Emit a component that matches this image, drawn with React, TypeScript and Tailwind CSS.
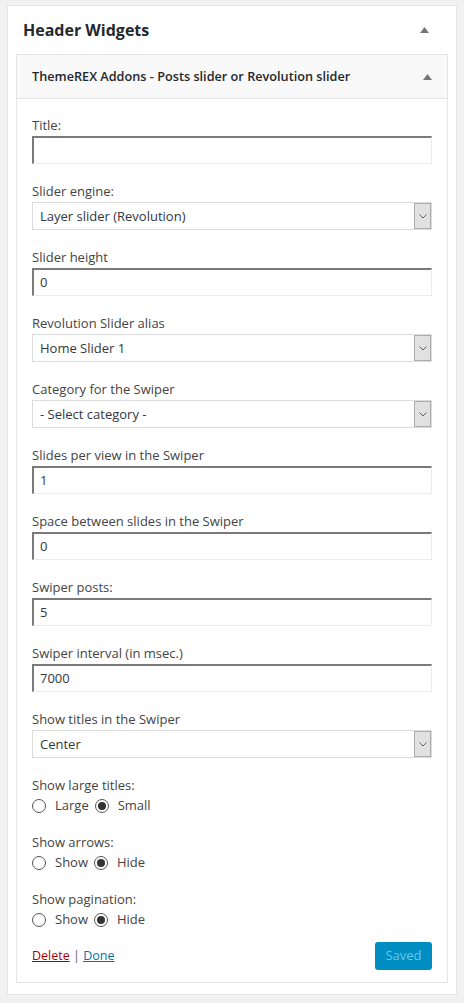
import React from 'react';

const font = { fontFamily: '"Open Sans", "Noto Sans", sans-serif' };

type Field =
  | { kind: 'input'; label: string; value: string }
  | { kind: 'select'; label: string; value: string }
  | { kind: 'radio'; label: string; options: [string, string]; checked: number };

const fields: Field[] = [
  { kind: 'input', label: 'Title:', value: '' },
  { kind: 'select', label: 'Slider engine:', value: 'Layer slider (Revolution)' },
  { kind: 'input', label: 'Slider height', value: '0' },
  { kind: 'select', label: 'Revolution Slider alias', value: 'Home Slider 1' },
  { kind: 'select', label: 'Category for the Swiper', value: '- Select category -' },
  { kind: 'input', label: 'Slides per view in the Swiper', value: '1' },
  { kind: 'input', label: 'Space between slides in the Swiper', value: '0' },
  { kind: 'input', label: 'Swiper posts:', value: '5' },
  { kind: 'input', label: 'Swiper interval (in msec.)', value: '7000' },
  { kind: 'select', label: 'Show titles in the Swiper', value: 'Center' },
  { kind: 'radio', label: 'Show large titles:', options: ['Large', 'Small'], checked: 1 },
  { kind: 'radio', label: 'Show arrows:', options: ['Show', 'Hide'], checked: 1 },
  { kind: 'radio', label: 'Show pagination:', options: ['Show', 'Hide'], checked: 1 },
];

function Caret() {
  return (
    <svg width="9" height="6" viewBox="0 0 9 6" className="shrink-0">
      <path d="M4.5 0 L9 6 L0 6 Z" fill="#72777c" />
    </svg>
  );
}

function TextBox({ value }: { value: string }) {
  return (
    <div className="h-[28px] border-t-2 border-l-2 border-t-[#7a7a7a] border-l-[#7a7a7a] border-r border-b border-r-[#ececec] border-b-[#ececec] bg-white pl-[6px] text-[13px] leading-[25px] text-[#32373c]">
      {value}
    </div>
  );
}

function SelectBox({ value }: { value: string }) {
  return (
    <div className="flex h-[28px] border border-[#dcdcdc] bg-white">
      <div className="flex-1 pl-[7px] text-[13px] leading-[26px] text-[#32373c]">{value}</div>
      <div className="flex w-[17px] items-center justify-center border border-[#adadad] bg-[#e1e1e1]">
        <svg width="8" height="5" viewBox="0 0 8 5">
          <path d="M0.5 0.5 L4 4 L7.5 0.5" fill="none" stroke="#606060" strokeWidth="1" />
        </svg>
      </div>
    </div>
  );
}

function Radio({ on }: { on: boolean }) {
  return (
    <span className="flex h-[14px] w-[14px] shrink-0 items-center justify-center rounded-full border border-[#555] bg-white">
      {on && <span className="h-[8px] w-[8px] rounded-full bg-[#333]" />}
    </span>
  );
}

export default function App() {
  return (
    <div className="min-h-[1003px] bg-[#f1f1f1] px-[7px] pt-[5px]" style={font}>
      <div className="border border-[#e5e5e5] bg-white px-[8px] pb-[11px]">
        <div className="flex h-[48px] items-center justify-between pl-[7px] pr-[19px]">
          <h2 className="text-[16px] font-bold text-[#23282d]">Header Widgets</h2>
          <Caret />
        </div>

        <div className="border border-[#e5e5e5]">
          <div className="flex h-[44px] items-center justify-between border-b border-[#e5e5e5] bg-[#f9f9f9] pl-[15px] pr-[15px]">
            <span className="text-[12.7px] font-semibold text-[#23282d]">
              ThemeREX Addons - Posts slider or Revolution slider
            </span>
            <Caret />
          </div>

          <div className="px-[15px] pt-[16px] pb-[12px] text-[13px] text-[#444]">
            {fields.map((f, i) => (
              <div
                key={f.label}
                className={i === fields.length - 1 ? 'mb-[12px]' : f.kind === 'radio' ? 'mb-[16px]' : 'mb-[17px]'}
              >
                <div className="mb-[1px] h-[20px] leading-[20px]">{f.label}</div>
                {f.kind === 'input' && <TextBox value={f.value} />}
                {f.kind === 'select' && <SelectBox value={f.value} />}
                {f.kind === 'radio' && (
                  <div className="flex h-[20px] items-center">
                    <Radio on={f.checked === 0} />
                    <span className="ml-[9px] mr-[6px]">{f.options[0]}</span>
                    <Radio on={f.checked === 1} />
                    <span className="ml-[9px]">{f.options[1]}</span>
                  </div>
                )}
              </div>
            ))}

            <div className="flex items-center justify-between">
              <div className="text-[12.5px]">
                <a href="#" className="text-[#a00] underline">Delete</a>
                <span className="text-[#666]"> | </span>
                <a href="#" className="text-[#0073aa] underline">Done</a>
              </div>
              <button className="h-[28px] w-[57px] rounded-[3px] bg-[#008ec2] text-[13px] text-[#66c6e4]">
                Saved
              </button>
            </div>
          </div>
        </div>
      </div>
    </div>
  );
}
